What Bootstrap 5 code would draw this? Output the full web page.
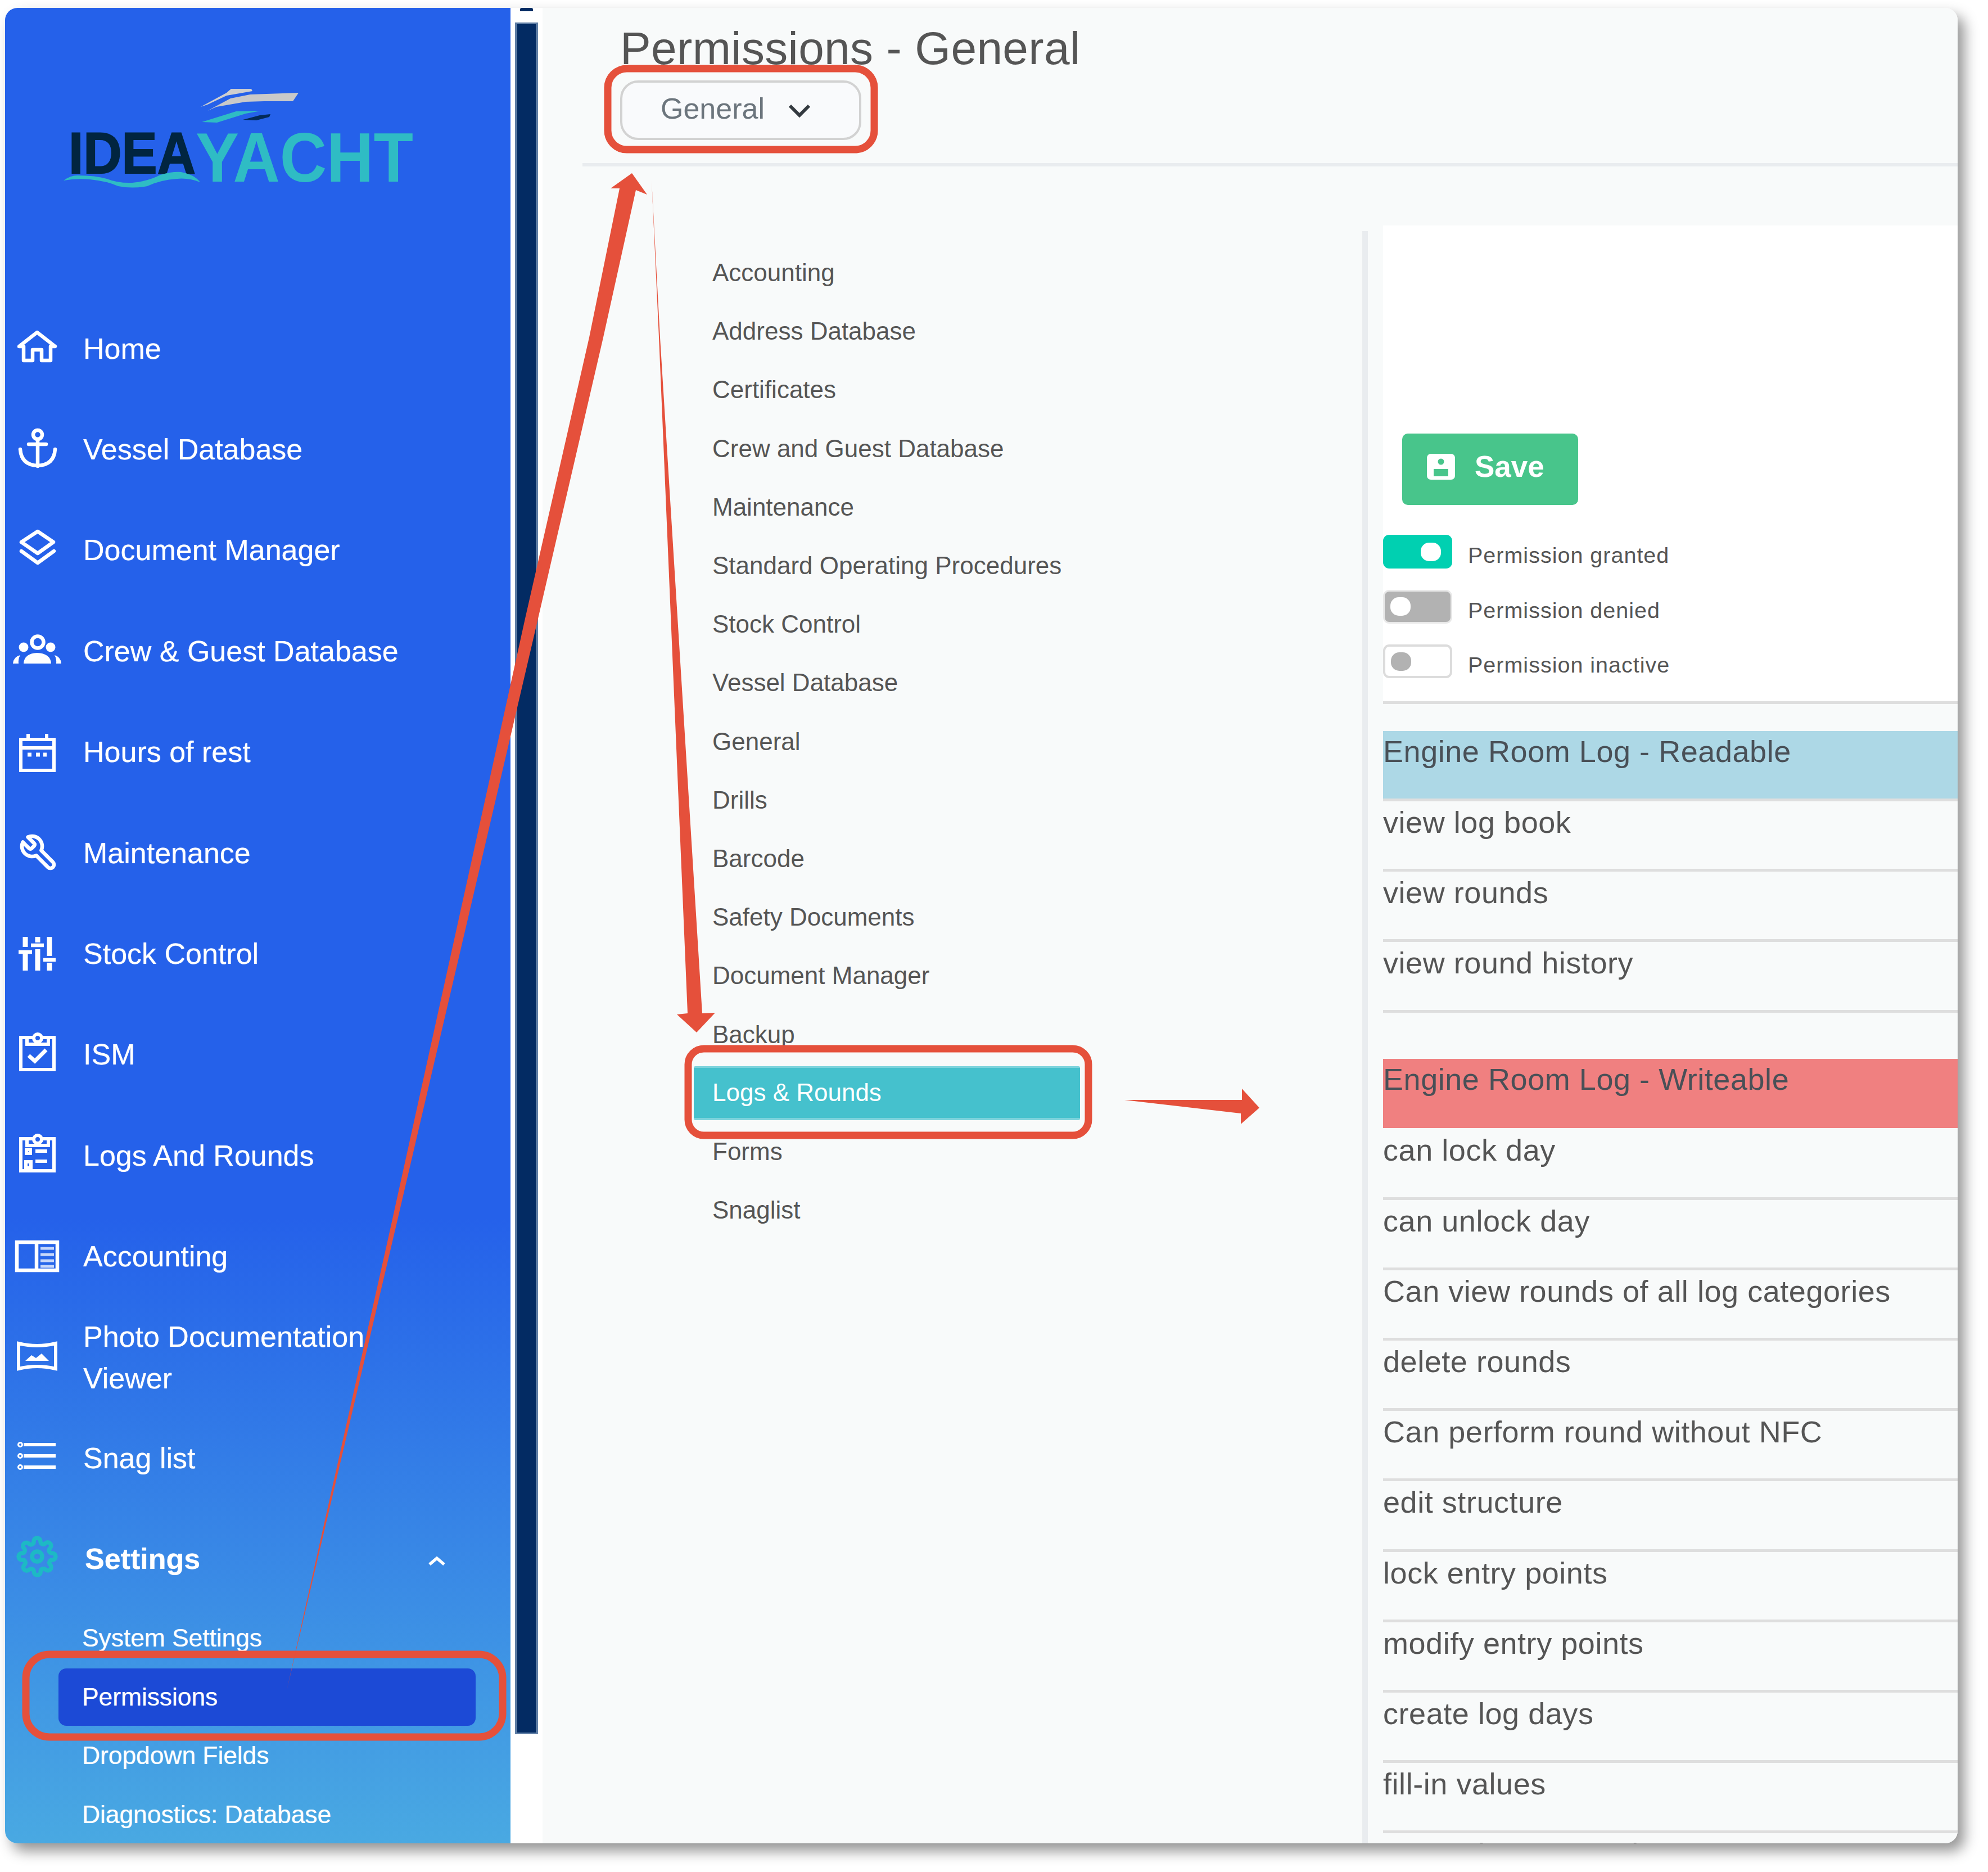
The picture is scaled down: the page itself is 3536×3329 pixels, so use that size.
<!DOCTYPE html>
<html lang="en">
<head>
<meta charset="utf-8">
<title>Permissions - General</title>
<link href="https://cdn.jsdelivr.net/npm/bootstrap@5.3.0/dist/css/bootstrap.min.css" rel="stylesheet">
<style>
html,body{margin:0;width:3536px;height:3329px;overflow:hidden;background:#fff;font-family:"Liberation Sans",Arial,sans-serif}
body{position:relative}
.win{position:absolute;left:9px;top:14px;width:3473px;height:3264px;border-radius:22px;overflow:hidden;background:#fff;box-shadow:12px 14px 24px rgba(0,0,0,.42)}
.side{width:899px;flex:none;background:linear-gradient(180deg,#2561ea 0,#2561ea 66%,#49a9e2 100%)}
.logo-box{height:516px}
.logo-box svg{display:block}
.side-link{height:179.4px;padding:0 0 0 21px;color:#fff;font-size:52px;line-height:74px;text-shadow:0 0 1px rgba(255,255,255,.7)}
.side-link:hover,.side-link:focus{color:#fff}
.side-link svg{width:72px;height:72px;flex:none;margin-right:46px;overflow:visible}
.side-set{height:178px;font-weight:700}
.side-set svg.gear{margin-right:49px;transform:translateY(-4px)}
.side-set svg.up{width:36px;height:24px;margin:0 113px 0 auto;transform:translateY(4px)}
.sub-link{height:104.5px;margin-left:95px;width:742px;padding:0 0 0 42px;color:#fff;font-size:44.5px;letter-spacing:-.1px;border-radius:14px;text-shadow:0 0 1px rgba(255,255,255,.6)}
.sub-link:hover,.sub-link:focus{color:#fff}
.sub-on{background:#1c4ad6;height:102px;margin-top:2px;margin-bottom:1px}
.gutter{width:57px;flex:none;background:#fff;padding:0 8px}
.gut-dash{height:6px;margin:0 9px 20px;background:#032b63;border-radius:3px 3px 0 0}
.gut-bar{height:3044px;background:#032b63;border:4px solid #5f7ea5;border-width:3px 4px}
.main-pane{flex:1 1 auto;min-width:0;background:#f8fafa}
.head-box{height:276px;padding:24px 0 0 138px}
.page-title{font-size:82px;line-height:96px;margin:0;color:#555;font-weight:400;letter-spacing:.35px}
.drop-btn{width:429px;height:106px;margin-top:9px;border:4px solid #d2d2d2;border-radius:32px;background:#f9fafc;color:#6c757d;font-size:52px;padding:0 18px 6px 0;gap:42px}
.drop-btn svg{width:40px;height:26px;transform:translateY(4px)}
.hr-line{height:6px;background:#e9ecef;margin-left:71px}
.cols{padding-top:105px}
.left-col{width:1458px;flex:none;padding:32px 0 0 269px}
.perm-link{height:104.2px;padding:0 0 0 33px;width:687px;color:#555;font-size:44px;letter-spacing:0}
.perm-link:hover,.perm-link:focus{color:#555}
.perm-on{background:#45c1cd;color:#fff;height:96px;margin:4px 0;border:solid #7cd3dc;border-width:3px 0 4px;border-radius:3px}
.perm-on:hover,.perm-on:focus{color:#fff}
.divider{width:10px;flex:none;background:#e9ecef;margin-top:10px;margin-right:27px;height:3000px}
.right-col{flex:1 1 auto;min-width:0}
.white-box{height:851px;background:#fff;padding:370px 0 0 34px;border-bottom:5px solid #dedede}
.save-btn{width:313px;height:127px;background:#48c58b;border:0;border-radius:10px;color:#fff;font-weight:700;font-size:53px;padding:0 0 10px 44px;gap:35px}
.save-btn svg{width:50px;height:46px}
.leg-rows{margin:53px 0 0 -34px}
.leg-row{height:97.5px;gap:28px;color:#555;font-size:39.5px;letter-spacing:1px}
.leg-row span.txt{padding-top:7px}
.tgl{width:123px;height:60px;border-radius:11px;padding:0 10px}
.tgl i{display:block;width:36px;height:33px;border-radius:15px}
.tgl-on{background:#00d0b1}.tgl-on i{background:#fff;margin-left:auto;margin-right:10px}
.tgl-off{background:#b2b2b2;border:3px solid #e9e9e9}.tgl-off i{background:#fff}
.tgl-none{background:#fff;border:4px solid #dcdcdc}.tgl-none i{background:#b2b2b2}
.groups{margin-top:48px}
.grp-head{height:123px;font-size:54px;line-height:72px;color:#495057;letter-spacing:.55px;border-bottom:5px solid #dedede;white-space:nowrap}
.grp-blue{background:#add8e6;height:125px}
.grp-red{background:#f08080;margin-top:82px;border-bottom:0}
.perm-row{height:125.2px;font-size:54px;line-height:75px;color:#555;letter-spacing:.55px;border-bottom:5px solid #dedede;white-space:nowrap}
.perm-first{height:128px;line-height:78px}
.annot{position:absolute;left:0;top:0;pointer-events:none}
</style>
</head>
<body>
<div class="win d-flex">
  <aside class="side">
    <div class="logo-box">
      <svg width="899" height="516" viewBox="0 0 899 516">
        <g transform="translate(-9 -14)">
          <polygon fill="#cfcfcf" points="357,190 403,165 411,158 447,158 449,162 403,170 369,186"/>
          <polygon fill="#c9c9c9" points="369,197 410,175 445,168 531,165 521,180 470,180 437,181 385,190"/>
          <polygon fill="#2fbcc4" points="359,217 420,198 464,197 437,202 386,218"/>
          <polygon fill="#032a58" points="432,213 462,205 481,203 479,208 456,214"/>
          <text x="122" y="308" font-family="Liberation Sans" font-weight="700" font-size="103" fill="#012540" stroke="#012540" stroke-width="2" textLength="226" lengthAdjust="spacingAndGlyphs">IDEA</text>
          <text x="348" y="323" font-family="Liberation Sans" font-weight="700" font-size="124" fill="#2fbcc4" textLength="387" lengthAdjust="spacingAndGlyphs">YACHT</text>
          <path fill="#2fbcc4" d="M113 321 Q125 312 138 312 Q170 312 190 318 Q210 326 235 325 Q265 322 285 311 Q305 305 322 306 Q345 310 356 324 Q335 316 315 318 Q285 320 262 331 Q235 336 210 331 Q190 322 160 319 Q135 317 113 321Z"/>
        </g>
      </svg>
    </div>
    <nav class="nav flex-column">
      <a class="nav-link side-link d-flex align-items-center" href="#"><svg viewBox="0 0 72 72" fill="none" stroke="#fff" stroke-width="6.5" stroke-linejoin="round"><path d="M4 32 36 7 68 32H60V57H44V38H28V57H12V32Z"/></svg>Home</a>
      <a class="nav-link side-link d-flex align-items-center" href="#"><svg viewBox="0 0 72 72" fill="none" stroke="#fff" stroke-width="6.5" stroke-linecap="round"><circle cx="37" cy="10" r="8"/><path d="M21 27H52M37 18V66M6 36Q8 64 37 65Q66 64 68 36"/></svg>Vessel Database</a>
      <a class="nav-link side-link d-flex align-items-center" href="#"><svg viewBox="0 0 72 72" fill="none" stroke="#fff" stroke-width="6.5" stroke-linejoin="round" stroke-linecap="round"><path d="M37 3 65 22 37 42 8 22Z"/><path d="M8 38 37 59 66 38"/></svg>Document Manager</a>
      <a class="nav-link side-link d-flex align-items-center" href="#"><svg viewBox="0 0 72 72" fill="#fff" stroke="none"><circle cx="37" cy="20" r="10.5" fill="none" stroke="#fff" stroke-width="6.5"/><circle cx="12" cy="29" r="8.5"/><circle cx="60" cy="29" r="8.5"/><path d="M12 58Q13 40 36 39 60 40 61 58Z"/><path d="M-7 58Q-6 46 6 43 2 50 3 58ZM79 58Q78 46 67 43 71 50 70 58Z"/></svg>Crew &amp; Guest Database</a>
      <a class="nav-link side-link d-flex align-items-center" href="#"><svg viewBox="0 0 72 72" fill="none" stroke="#fff" stroke-width="6"><path d="M7 14H66V69H7ZM7 29H66"/><path d="M20 4V14M53 4V14"/><path d="M19 41H26M34 41H41M47 41H53" stroke-width="7"/></svg>Hours of rest</a>
      <a class="nav-link side-link d-flex align-items-center" href="#"><svg viewBox="0 0 72 72" fill="none" stroke="#fff" stroke-width="2.2" stroke-linejoin="round"><path transform="translate(75 0) scale(-3 3)" d="M14.7 6.3a1 1 0 0 0 0 1.4l1.6 1.6a1 1 0 0 0 1.4 0l3.77-3.77a6 6 0 0 1-7.94 7.94l-6.91 6.91a2.12 2.12 0 0 1-3-3l6.91-6.91a6 6 0 0 1 7.94-7.94l-3.76 3.76z"/></svg>Maintenance</a>
      <a class="nav-link side-link d-flex align-items-center" href="#"><svg viewBox="0 0 72 72" fill="none" stroke="#fff"><path stroke-width="9" d="M15 6V24M15 36V66M37 6V16M37 28V66M58 6V40M58 52V66"/><path stroke-width="6.5" d="M3 33H27M25 21H48M47 47H69"/></svg>Stock Control</a>
      <a class="nav-link side-link d-flex align-items-center" href="#"><svg viewBox="0 0 72 72" fill="none" stroke="#fff" stroke-width="6"><path d="M28 6H7V63H66V6H45"/><path d="M18 9V18H56V9"/><circle cx="37" cy="7" r="7"/><path d="M21 38 32 48 52 28" stroke-width="7"/></svg>ISM</a>
      <a class="nav-link side-link d-flex align-items-center" href="#"><svg viewBox="0 0 72 72" fill="none" stroke="#fff" stroke-width="6"><path d="M28 6H7V63H66V6H45"/><path d="M18 9V18H56V9"/><circle cx="37" cy="7" r="7"/><path d="M33 28H54M33 46H54M17 25H24V32H17ZM16 47H25V58H16Z"/></svg>Logs And Rounds</a>
      <a class="nav-link side-link d-flex align-items-center" href="#"><svg viewBox="0 0 72 72" fill="none" stroke="#fff" stroke-width="6.5"><path d="M0 11H72V61H0ZM35 11V61"/><path d="M42 22H66M42 33H66M42 44H66M42 54H66" stroke-width="5" stroke-opacity=".75"/></svg>Accounting</a>
      <a class="nav-link side-link d-flex align-items-center" href="#"><svg viewBox="0 0 72 72" fill="none" stroke="#fff" stroke-width="6"><path d="M3 11Q36 19 69 11V56Q36 48 3 56Z"/><path d="M15 42 26 32 34 37 44 29 57 42Z" fill="#fff" stroke="none"/></svg><span>Photo Documentation<br>Viewer</span></a>
      <a class="nav-link side-link d-flex align-items-center" href="#"><svg viewBox="0 0 72 72" fill="none" stroke="#fff" stroke-width="6"><path d="M12 12H69M12 32H69M12 52H69"/><g stroke-width="3"><circle cx="6" cy="12" r="3.5"/><circle cx="6" cy="32" r="3.5"/><circle cx="6" cy="52" r="3.5"/></g></svg>Snag list</a>
      <a class="nav-link side-link side-set d-flex align-items-center" href="#"><svg class="gear" viewBox="0 0 24 24" fill="none" stroke="#1db9c5" stroke-width="2.5"><circle cx="12" cy="12" r="3"/><path d="M19.4 15a1.65 1.65 0 0 0 .33 1.82l.06.06a2 2 0 1 1-2.83 2.83l-.06-.06a1.65 1.65 0 0 0-2.8 1.17V21a2 2 0 1 1-4 0v-.09A1.65 1.65 0 0 0 7.3 19.74l-.06.06a2 2 0 1 1-2.83-2.83l.06-.06A1.65 1.65 0 0 0 3.3 14H3a2 2 0 1 1 0-4h.09A1.65 1.65 0 0 0 4.26 7.2l-.06-.06a2 2 0 1 1 2.83-2.83l.06.06A1.65 1.65 0 0 0 10 3.3V3a2 2 0 1 1 4 0v.09a1.65 1.65 0 0 0 2.8 1.17l.06-.06a2 2 0 1 1 2.83 2.83l-.06.06A1.65 1.65 0 0 0 20.7 10H21a2 2 0 1 1 0 4h-.09a1.65 1.65 0 0 0-1.51 1z"/></svg>Settings<svg class="up" viewBox="0 0 36 24" fill="none" stroke="#fff" stroke-width="5.5"><path d="M5 18 18 7 31 18"/></svg></a>
      <a class="nav-link sub-link d-flex align-items-center" href="#">System Settings</a>
      <a class="nav-link sub-link sub-on d-flex align-items-center" href="#">Permissions</a>
      <a class="nav-link sub-link d-flex align-items-center" href="#">Dropdown Fields</a>
      <a class="nav-link sub-link d-flex align-items-center" href="#">Diagnostics: Database</a>
    </nav>
  </aside>
  <div class="gutter">
    <div class="gut-dash"></div>
    <div class="gut-bar"></div>
  </div>
  <main class="main-pane">
    <div class="head-box">
      <h1 class="page-title">Permissions - General</h1>
      <button type="button" class="btn drop-btn d-flex align-items-center justify-content-center">General<svg viewBox="0 0 40 26" fill="none" stroke="#343a40" stroke-width="6"><path d="M3 4 20 21 37 4"/></svg></button>
    </div>
    <div class="hr-line"></div>
    <div class="cols d-flex">
      <div class="left-col">
        <nav class="nav flex-column">
          <a class="nav-link perm-link d-flex align-items-center" href="#">Accounting</a>
          <a class="nav-link perm-link d-flex align-items-center" href="#">Address Database</a>
          <a class="nav-link perm-link d-flex align-items-center" href="#">Certificates</a>
          <a class="nav-link perm-link d-flex align-items-center" href="#">Crew and Guest Database</a>
          <a class="nav-link perm-link d-flex align-items-center" href="#">Maintenance</a>
          <a class="nav-link perm-link d-flex align-items-center" href="#">Standard Operating Procedures</a>
          <a class="nav-link perm-link d-flex align-items-center" href="#">Stock Control</a>
          <a class="nav-link perm-link d-flex align-items-center" href="#">Vessel Database</a>
          <a class="nav-link perm-link d-flex align-items-center" href="#">General</a>
          <a class="nav-link perm-link d-flex align-items-center" href="#">Drills</a>
          <a class="nav-link perm-link d-flex align-items-center" href="#">Barcode</a>
          <a class="nav-link perm-link d-flex align-items-center" href="#">Safety Documents</a>
          <a class="nav-link perm-link d-flex align-items-center" href="#">Document Manager</a>
          <a class="nav-link perm-link d-flex align-items-center" href="#">Backup</a>
          <a class="nav-link perm-link perm-on d-flex align-items-center" href="#">Logs &amp; Rounds</a>
          <a class="nav-link perm-link d-flex align-items-center" href="#">Forms</a>
          <a class="nav-link perm-link d-flex align-items-center" href="#">Snaglist</a>
        </nav>
      </div>
      <div class="divider"></div>
      <div class="right-col">
        <div class="white-box">
          <button type="button" class="btn save-btn d-flex align-items-center"><svg viewBox="0 0 50 46"><rect width="50" height="46" rx="7" fill="#fff"/><circle cx="25" cy="14" r="5.5" fill="#48c58b"/><rect x="12" y="27" width="26" height="13" fill="#48c58b"/></svg>Save</button>
          <div class="leg-rows">
            <div class="leg-row d-flex"><span class="tgl tgl-on d-flex align-items-center"><i></i></span><span class="txt">Permission granted</span></div>
            <div class="leg-row d-flex"><span class="tgl tgl-off d-flex align-items-center"><i></i></span><span class="txt">Permission denied</span></div>
            <div class="leg-row d-flex"><span class="tgl tgl-none d-flex align-items-center"><i></i></span><span class="txt">Permission inactive</span></div>
          </div>
        </div>
        <div class="groups">
          <div class="grp-head grp-blue">Engine Room Log - Readable</div>
          <div class="perm-row">view log book</div>
          <div class="perm-row">view rounds</div>
          <div class="perm-row">view round history</div>
          <div class="grp-head grp-red">Engine Room Log - Writeable</div>
          <div class="perm-row perm-first">can lock day</div>
          <div class="perm-row">can unlock day</div>
          <div class="perm-row">Can view rounds of all log categories</div>
          <div class="perm-row">delete rounds</div>
          <div class="perm-row">Can perform round without NFC</div>
          <div class="perm-row">edit structure</div>
          <div class="perm-row">lock entry points</div>
          <div class="perm-row">modify entry points</div>
          <div class="perm-row">create log days</div>
          <div class="perm-row">fill-in values</div>
          <div class="perm-row">create log categories</div>
        </div>
      </div>
    </div>
  </main>
</div>
<svg class="annot" width="3536" height="3329" viewBox="0 0 3536 3329" fill="none" stroke="#e5503b" stroke-width="13">
  <rect x="1081" y="122" width="474" height="144" rx="34"/>
  <rect x="46" y="2942" width="848" height="147" rx="42"/>
  <rect x="1224" y="1865" width="712" height="154" rx="28"/>
  <g fill="#e5503b" stroke="none">
    <polygon points="1124,308 1151,346 1131,338 1073,600 957,1100 701,2195 510,3006 692,2195 934,1100 1048,600 1102,335 1086,335"/>
    <polygon points="1159,321 1174,600 1249,1802 1272,1801 1239,1836 1204,1804 1223,1802 1172,600"/>
    <polygon points="2000,1956 2209,1956 2209,1936 2240,1970 2207,1999 2207,1980"/>
  </g>
</svg>
</body>
</html>
